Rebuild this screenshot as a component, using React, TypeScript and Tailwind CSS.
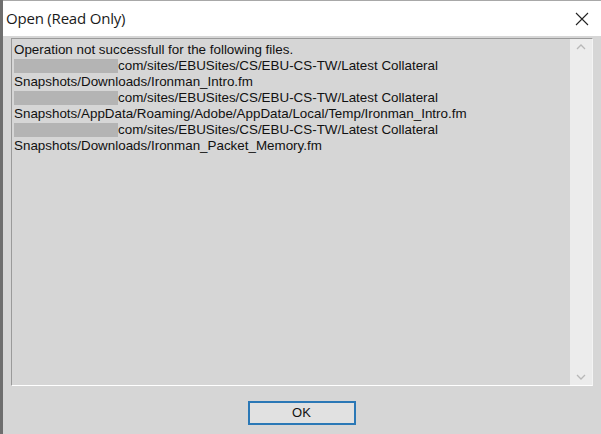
import React from 'react';

const lines: { blur?: boolean; text: string }[] = [
  { text: 'Operation not successfull for the following files.' },
  { blur: true, text: 'com/sites/EBUSites/CS/EBU-CS-TW/Latest Collateral' },
  { text: 'Snapshots/Downloads/Ironman_Intro.fm' },
  { blur: true, text: 'com/sites/EBUSites/CS/EBU-CS-TW/Latest Collateral' },
  { text: 'Snapshots/AppData/Roaming/Adobe/AppData/Local/Temp/Ironman_Intro.fm' },
  { blur: true, text: 'com/sites/EBUSites/CS/EBU-CS-TW/Latest Collateral' },
  { text: 'Snapshots/Downloads/Ironman_Packet_Memory.fm' },
];

const App: React.FC = () => {
  return (
    <div
      className="w-[601px] h-[434px] flex flex-col bg-[#d6d6d6] border-l-[3px] border-[#6e6e6e] overflow-hidden"
      style={{ fontFamily: '"Liberation Sans", Arial, sans-serif' }}
    >
      {/* title bar */}
      <div className="h-[36px] shrink-0 bg-white border-t border-[#a8a8a8] flex items-center justify-between pl-[3px] pr-[12px]">
        <span className="text-[15px] text-[#1a1a1a] tracking-[-0.2px]" style={{ fontFamily: '"Open Sans", "Liberation Sans", sans-serif' }}>
          Open (Read Only)
        </span>
        <svg width="14" height="14" viewBox="0 0 14 14" className="text-[#222]">
          <path d="M1 1 L13 13 M13 1 L1 13" stroke="currentColor" strokeWidth="1.1" fill="none" />
        </svg>
      </div>

      {/* body */}
      <div className="flex-1 flex flex-col pl-[8px] pr-[8px] pt-[2px]">
        <div className="h-[348px] flex border-t border-l border-[#9a9a9a] border-b border-r border-b-white border-r-[#f4f4f4]">
          <div className="flex-1 pl-[2px] pt-[3px] text-[13.4px] leading-[16px] text-[#111]">
            {lines.map((l, i) => (
              <div key={i} className="flex items-center whitespace-nowrap">
                {l.blur && <span className="inline-block w-[104px] h-[14px] bg-[#b4b4b4]" />}
                <span>{l.text}</span>
              </div>
            ))}
          </div>
          {/* scrollbar */}
          <div className="w-[22px] bg-[#ececec] flex flex-col items-center justify-between py-[5px]">
            <svg width="10" height="6" viewBox="0 0 10 6">
              <path d="M1 5 L5 1 L9 5" stroke="#b8b8b8" strokeWidth="1.3" fill="none" />
            </svg>
            <svg width="10" height="6" viewBox="0 0 10 6">
              <path d="M1 1 L5 5 L9 1" stroke="#b8b8b8" strokeWidth="1.3" fill="none" />
            </svg>
          </div>
        </div>

        <div className="flex justify-center pt-[15px]">
          <button className="w-[108px] h-[24px] ml-[-1px] border-2 border-[#2b78b6] bg-[#e1e1e1] text-[13px] text-[#111] flex items-center justify-center">
            OK
          </button>
        </div>
      </div>
    </div>
  );
};

export default App;
